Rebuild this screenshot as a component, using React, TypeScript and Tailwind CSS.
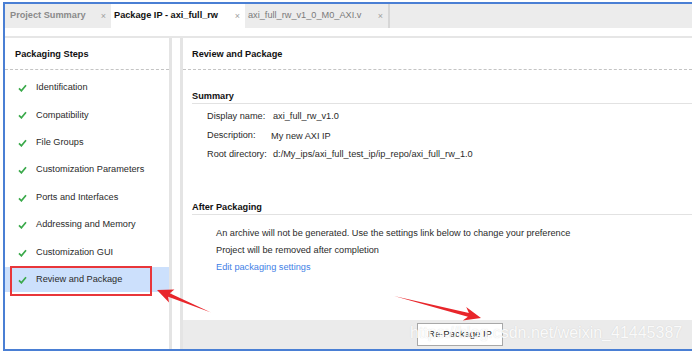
import { ReactNode } from 'react';

const steps = [
  'Identification',
  'Compatibility',
  'File Groups',
  'Customization Parameters',
  'Ports and Interfaces',
  'Addressing and Memory',
  'Customization GUI',
  'Review and Package',
];

function Check() {
  return (
    <svg width="9" height="8" viewBox="0 0 9 8" className="shrink-0">
      <path d="M1 4.3 L3.4 6.8 L8 1.2" fill="none" stroke="#3aa94a" strokeWidth="1.7" />
    </svg>
  );
}

function Close() {
  return <span className="text-[9px] text-[#a0a0a0] leading-none">×</span>;
}

function SectionTitle({ children }: { children: ReactNode }) {
  return (
    <div className="h-[15px] flex items-center pt-[1px] font-bold text-[#111] border-b border-[#e2e2e2]">{children}</div>
  );
}

export default function App() {
  return (
    <div className="relative w-[692px] h-[354px] overflow-hidden bg-white font-['Liberation_Sans',Arial,sans-serif] text-[9.2px] text-[#2a2a2a]">
      <div className="mt-[2px] ml-[3px] h-[349px] flex flex-col border-t-2 border-l-2 border-b-2 border-[#4a7fd4]">
        {/* Tabs */}
        <div className="h-[24px] flex bg-[#ececec] shrink-0">
          <div className="w-[106px] flex items-center pl-[5px] pr-[5px] justify-between">
            <span className="font-bold text-[#8a8a8a]">Project Summary</span>
            <Close />
          </div>
          <div className="w-[134px] flex items-center pl-[3px] pr-[5px] justify-between bg-white">
            <span className="font-bold text-[#111]">Package IP - axi_full_rw</span>
            <Close />
          </div>
          <div className="w-[145px] flex items-center pl-[3px] pr-[5px] justify-between border-r-2 border-[#d6d6d6]">
            <span className="text-[#7a7a7a]">axi_full_rw_v1_0_M0_AXI.v</span>
            <Close />
          </div>
        </div>
        <div className="h-[8px] shrink-0" />
        <div className="h-[2px] bg-[#e6e6e6] shrink-0" />

        <div className="flex-1 flex min-h-0">
          {/* Left panel */}
          <div className="w-[167px] border-r-[3px] border-[#e4e4e4] flex flex-col">
            <div className="h-[32px] flex items-center pt-[3px] pl-[10px] font-bold text-[#111] border-b border-dashed border-[#c4c4c4]">
              Packaging Steps
            </div>
            <div className="pt-[5.5px] flex flex-col gap-[2.43px]">
              {steps.map((s, i) => (
                <div
                  key={s}
                  className={`h-[25px] flex items-center pl-[13px] gap-[9px] ${i === steps.length - 1 ? 'bg-[#cce0fc]' : ''}`}
                >
                  <Check />
                  <span>{s}</span>
                </div>
              ))}
            </div>
          </div>

          <div className="w-[8px]" />

          {/* Right panel */}
          <div className="flex-1 border-l-[3px] border-[#e4e4e4] flex flex-col">
            <div className="h-[32px] flex items-center pt-[3px] pl-[9px] font-bold text-[#111] border-b border-dashed border-[#c4c4c4]">
              Review and Package
            </div>
            <div className="pl-[9px]">
              <div className="mt-[19px]">
                <SectionTitle>Summary</SectionTitle>
              </div>
              <div className="pt-[3px] pl-[15px]">
                <div className="h-[19px] flex items-center">
                  <span className="w-[66px]">Display name:</span>
                  <span>axi_full_rw_v1.0</span>
                </div>
                <div className="h-[19px] flex items-center">
                  <span className="w-[64px]">Description:</span>
                  <span className="mt-[3px]">My new AXI IP</span>
                </div>
                <div className="h-[19px] flex items-center">
                  <span className="w-[66px]">Root directory:</span>
                  <span>d:/My_ips/axi_full_test_ip/ip_repo/axi_full_rw_1.0</span>
                </div>
              </div>

              <div className="mt-[36px]">
                <SectionTitle>After Packaging</SectionTitle>
              </div>
              <div className="pt-[10.5px] pl-[24px]">
                <div className="h-[17px] flex items-center">
                  An archive will not be generated. Use the settings link below to change your preference
                </div>
                <div className="h-[17px] flex items-center">Project will be removed after completion</div>
                <div className="h-[17px] flex items-center text-[#3f7fe6]">Edit packaging settings</div>
              </div>
            </div>

            <div className="mt-auto h-[29px] bg-[#ebebeb] pl-[234px] pt-[3px]">
              <button className="w-[86px] h-[23px] bg-white border border-[#a8a8a8] text-[9.5px] text-[#222] flex items-center justify-center">
                Re-Package IP
              </button>
            </div>
          </div>
        </div>
      </div>

      {/* Annotations */}
      <div className="absolute left-[10px] top-[266px] w-[142px] h-[30px] border-2 border-[#e8363a]" />
      <svg className="absolute left-0 top-0 pointer-events-none" width="692" height="354">
        <polygon
          points="157,290 174.4,289.6 169.8,293.2 211,312.5 168.2,296.8 169,302.5"
          fill="#e8262b"
        />
        <polygon
          points="481,318 466.2,307 468.9,312.9 394,296 467.9,316.7 462.8,320.6"
          fill="#e8262b"
        />
      </svg>
      <div className="absolute left-[410px] top-[323px] text-[16px] leading-[20px] text-white/90 [text-shadow:0_0_1px_rgba(120,120,120,0.3)] pointer-events-none">
        https://blog.csdn.net/weixin_41445387
      </div>
    </div>
  );
}
